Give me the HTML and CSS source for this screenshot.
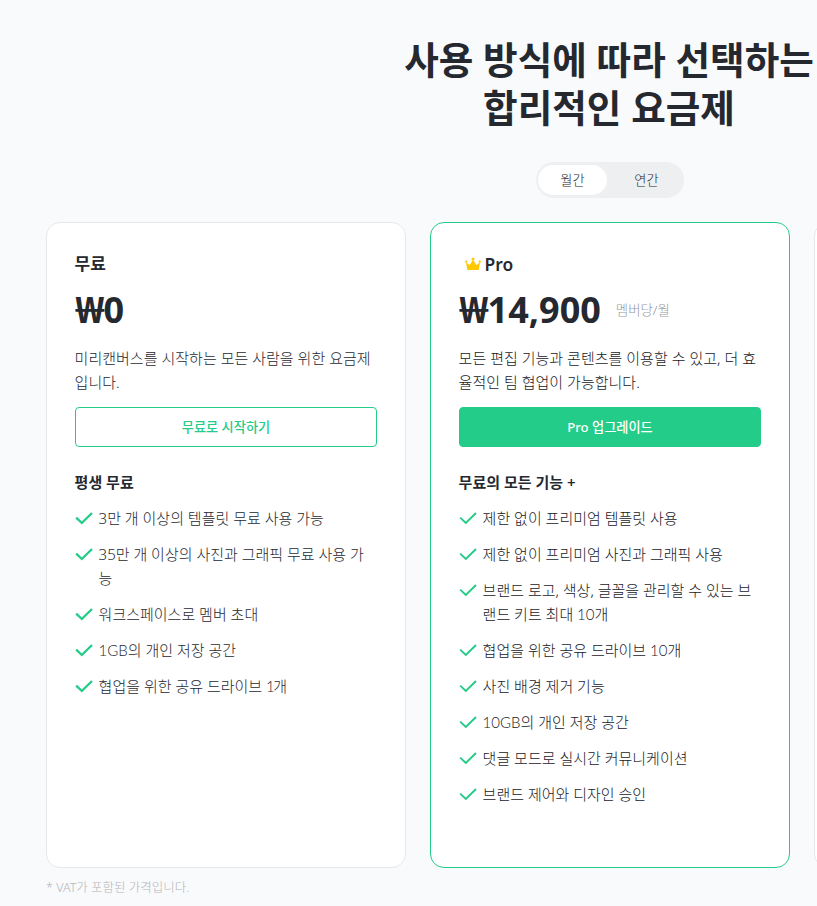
FILE: index.html
```html
<!DOCTYPE html>
<html lang="ko">
<head>
<meta charset="utf-8">
<title>요금제</title>
<link rel="stylesheet" href="styles.css">
</head>
<body>
<svg class="defs" width="0" height="0">
  <symbol id="check" viewBox="0 0 18 24"><path d="M1.2 11.6 6.8 17 17 7" fill="none" stroke="#23cc88"/></symbol>
</svg>
<main class="page">
  <h1 class="title">사용 방식에 따라 선택하는<br>합리적인 요금제</h1>
  <div class="toggle"><span class="option selected">월간</span><span class="option">연간</span></div>
  <div class="plans">
    <section class="card">
      <h2 class="name"><span>무료</span></h2>
      <div class="price"><span class="won">₩</span><span>0</span></div>
      <p class="desc"><span>미리캔버스를 시작하는 모든 사람을 위한 요금제</span><br><span>입니다.</span></p>
      <a class="button"><span>무료로 시작하기</span></a>
      <h3 class="subtitle"><span>평생 무료</span></h3>
      <ul class="features">
        <li><svg><use href="#check"/></svg><span>3만 개 이상의 템플릿 무료 사용 가능</span></li>
        <li><svg><use href="#check"/></svg><span>35만 개 이상의 사진과 그래픽 무료 사용 가<br>능</span></li>
        <li><svg><use href="#check"/></svg><span>워크스페이스로 멤버 초대</span></li>
        <li><svg><use href="#check"/></svg><span><span class="latin">1GB</span>의 개인 저장 공간</span></li>
        <li><svg><use href="#check"/></svg><span>협업을 위한 공유 드라이브 <span class="latin one">1</span>개</span></li>
      </ul>
    </section>
    <section class="card pro">
      <h2 class="name"><svg class="crown" viewBox="0 0 16 14"><path d="M2.3 13 1 5.4 4.7 8 8 2.7 11.3 8 15 5.4 13.7 13Z"/><circle cx="1.2" cy="4.6" r="1.2"/><circle cx="8" cy="2" r="1.5"/><circle cx="14.8" cy="4.6" r="1.2"/></svg><span>Pro</span></h2>
      <div class="price"><span class="won">₩</span><span>14,900</span><small>멤버당/월</small></div>
      <p class="desc"><span>모든 편집 기능과 콘텐츠를 이용할 수 있고, 더 효</span><br><span>율적인 팀 협업이 가능합니다.</span></p>
      <a class="button filled"><span>Pro 업그레이드</span></a>
      <h3 class="subtitle"><span>무료의 모든 기능 +</span></h3>
      <ul class="features">
        <li><svg><use href="#check"/></svg><span>제한 없이 프리미엄 템플릿 사용</span></li>
        <li><svg><use href="#check"/></svg><span>제한 없이 프리미엄 사진과 그래픽 사용</span></li>
        <li><svg><use href="#check"/></svg><span>브랜드 로고, 색상, 글꼴을 관리할 수 있는 브<br>랜드 키트 최대 <span class="latin">10</span>개</span></li>
        <li><svg><use href="#check"/></svg><span>협업을 위한 공유 드라이브 <span class="latin">10</span>개</span></li>
        <li><svg><use href="#check"/></svg><span>사진 배경 제거 기능</span></li>
        <li><svg><use href="#check"/></svg><span><span class="latin">10GB</span>의 개인 저장 공간</span></li>
        <li><svg><use href="#check"/></svg><span>댓글 모드로 실시간 커뮤니케이션</span></li>
        <li><svg><use href="#check"/></svg><span>브랜드 제어와 디자인 승인</span></li>
      </ul>
    </section>
    <section class="card"></section>
  </div>
  <p class="note">* VAT가 포함된 가격입니다.</p>
</main>
</body>
</html>
```
FILE: styles.css
```css
* { box-sizing: border-box; margin: 0; padding: 0; }
html { background: #f9fafc; }
body {
  width: 817px;
  height: 906px;
  overflow: hidden;
  color: #25282f;
  font-family: "Noto Sans", "Noto Sans CJK KR", sans-serif;
  white-space: nowrap;
}
.defs { display: block; }
.page { width: 1220px; padding: 36px 46px 0; }
.title { padding-right: 2px; font-size: 37.6px; line-height: 48px; font-weight: 700; text-align: center; }
.toggle {
  display: flex;
  gap: 5px;
  width: 148px;
  height: 36px;
  margin: 30px auto 24px;
  padding: 3px 2px;
  border-radius: 18px;
  background: #eeeff1;
}
.option {
  flex: none;
  width: 69px;
  height: 30px;
  border-radius: 15px;
  font-size: 13.2px;
  line-height: 30px;
  text-align: center;
  font-weight: 300;
}
.selected { background: #fff; }
.plans { display: flex; gap: 24px; }
.card {
  width: 360px;
  height: 646px;
  padding: 28px 28px 28px 27.6px;
  border: 1px solid #e7e8eb;
  border-radius: 14px;
  background: #fff;
}
.pro { border-color: #23cc88; }
.name { display: flex; align-items: center; height: 26px; font-size: 17px; line-height: 26px; font-weight: 600; }
.pro .name { font-size: 17.4px; line-height: 24px; }
.pro .name span { height: 25px; }
.crown { width: 16px; height: 14px; margin: 0 4px 0 6px; fill: #ffc800; }
.price { display: flex; align-items: center; height: 54px; margin-top: 6px; font-size: 36px; line-height: 54px; font-weight: 700; }
.won { width: 29px; transform: scaleX(1.12); transform-origin: left; }
.price small { margin-left: 15px; font-size: 13.4px; line-height: 52px; font-weight: 300; color: #96989c; }
.desc { margin-top: 9px; font-size: 15px; line-height: 24px; font-weight: 300; letter-spacing: 0.02px; }
.button {
  display: flex;
  align-items: center;
  justify-content: center;
  width: 302px;
  height: 40px;
  margin-top: 13px;
  margin-left: 0.4px;
  padding-bottom: 2px;
  border: 1px solid #23cc88;
  border-radius: 4px;
  color: #23cc88;
  font-size: 13.2px;
  font-weight: 500;
}
.filled { background: #23cc88; color: #fff; }
.subtitle { margin-top: 23px; font-size: 15px; line-height: 24px; font-weight: 600; }
.features { margin-top: 12px; list-style: none; font-size: 15px; line-height: 24px; font-weight: 300; }
.features li { display: flex; margin-bottom: 12px; }
.features svg { flex: none; width: 18px; height: 24px; margin-right: 6px; stroke-width: 2.3; }
.pro .features svg { stroke-width: 1.9; }
.pro .desc, .pro .features { color: #17191f; }
.latin { font-family: Lato, sans-serif; font-weight: 300; line-height: 1; }
.one { letter-spacing: -1.5px; }
.note { margin-top: 10px; font-size: 12.5px; line-height: 20px; font-weight: 300; color: #b4b6ba; }
```
